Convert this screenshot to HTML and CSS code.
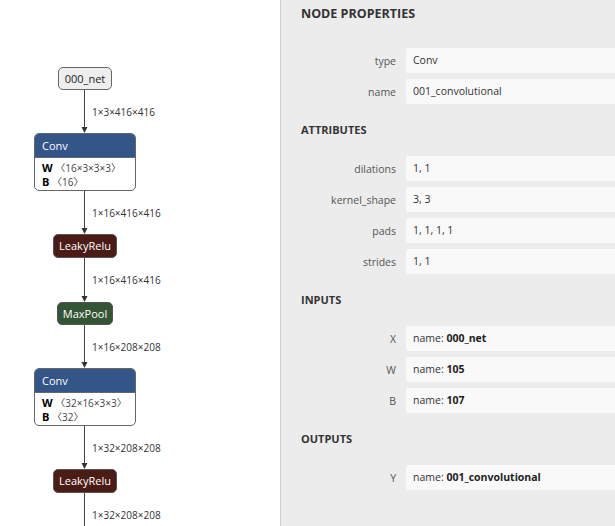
FILE: index.html
```html
<!DOCTYPE html>
<html lang="en">
<head>
  <meta charset="UTF-8">
  <title>Graph</title>
  <link rel="stylesheet" href="styles.css">
</head>
<body>
  <div class="graph">
    <div class="column">
      <div class="node node-input">000_net</div>
      <div class="edge">
        <svg class="wire" width="9" height="43" viewBox="0 0 9 43"><line x1="4.5" y1="0" x2="4.5" y2="40"/><path d="M1.5 37 L4.5 43 L7.5 37 Z"/></svg>
        <span class="shape">1×3×416×416</span>
      </div>
      <div class="node node-layer">
        <div class="node-title">Conv</div>
        <div class="node-body">
          <div><b>W</b> 〈16×3×3×3〉</div>
          <div><b>B</b> 〈16〉</div>
        </div>
      </div>
      <div class="edge">
        <svg class="wire" width="9" height="43" viewBox="0 0 9 43"><line x1="4.5" y1="0" x2="4.5" y2="40"/><path d="M1.5 37 L4.5 43 L7.5 37 Z"/></svg>
        <span class="shape">1×16×416×416</span>
      </div>
      <div class="node node-op node-activation">LeakyRelu</div>
      <div class="edge">
        <svg class="wire" width="9" height="44" viewBox="0 0 9 44"><line x1="4.5" y1="0" x2="4.5" y2="41"/><path d="M1.5 38 L4.5 44 L7.5 38 Z"/></svg>
        <span class="shape">1×16×416×416</span>
      </div>
      <div class="node node-op node-pool">MaxPool</div>
      <div class="edge">
        <svg class="wire" width="9" height="43" viewBox="0 0 9 43"><line x1="4.5" y1="0" x2="4.5" y2="40"/><path d="M1.5 37 L4.5 43 L7.5 37 Z"/></svg>
        <span class="shape">1×16×208×208</span>
      </div>
      <div class="node node-layer">
        <div class="node-title">Conv</div>
        <div class="node-body">
          <div><b>W</b> 〈32×16×3×3〉</div>
          <div><b>B</b> 〈32〉</div>
        </div>
      </div>
      <div class="edge">
        <svg class="wire" width="9" height="43" viewBox="0 0 9 43"><line x1="4.5" y1="0" x2="4.5" y2="40"/><path d="M1.5 37 L4.5 43 L7.5 37 Z"/></svg>
        <span class="shape">1×32×208×208</span>
      </div>
      <div class="node node-op node-activation">LeakyRelu</div>
      <div class="edge">
        <svg class="wire" width="9" height="43" viewBox="0 0 9 43"><line x1="4.5" y1="0" x2="4.5" y2="43"/></svg>
        <span class="shape">1×32×208×208</span>
      </div>
    </div>
  </div>

  <aside class="sidebar">
    <h2 class="sidebar-title">NODE PROPERTIES</h2>

    <section class="section section-first">
      <div class="item"><span class="item-name">type</span><span class="item-value">Conv</span></div>
      <div class="item"><span class="item-name">name</span><span class="item-value">001_convolutional</span></div>
    </section>

    <section class="section">
      <h3 class="section-title">ATTRIBUTES</h3>
      <div class="item"><span class="item-name">dilations</span><span class="item-value">1, 1</span></div>
      <div class="item"><span class="item-name">kernel_shape</span><span class="item-value">3, 3</span></div>
      <div class="item"><span class="item-name">pads</span><span class="item-value">1, 1, 1, 1</span></div>
      <div class="item"><span class="item-name">strides</span><span class="item-value">1, 1</span></div>
    </section>

    <section class="section">
      <h3 class="section-title">INPUTS</h3>
      <div class="item"><span class="item-name">X</span><span class="item-value">name: <b>000_net</b></span></div>
      <div class="item"><span class="item-name">W</span><span class="item-value">name: <b>105</b></span></div>
      <div class="item"><span class="item-name">B</span><span class="item-value">name: <b>107</b></span></div>
    </section>

    <section class="section">
      <h3 class="section-title">OUTPUTS</h3>
      <div class="item"><span class="item-name">Y</span><span class="item-value">name: <b>001_convolutional</b></span></div>
    </section>
  </aside>
</body>
</html>
```

FILE: styles.css
```css
html,
body {
    height: 100%;
}

body {
    margin: 0;
    display: flex;
    overflow: hidden;
    font-family: "Open Sans", "Noto Sans CJK JP", sans-serif;
    color: #333;
}

/* graph */

.graph {
    width: 280px;
    flex: none;
    background: #fff;
}

.column {
    width: 170px;
    padding-top: 67px;
    display: flex;
    flex-direction: column;
    align-items: center;
}

.node {
    box-sizing: border-box;
    border: 1px solid #666;
    border-radius: 5px;
    font-size: 11px;
}

.node-input {
    width: 54px;
    height: 23px;
    line-height: 21px;
    text-align: center;
    background: #eee;
    color: #222;
}

.node-op {
    height: 24px;
    line-height: 22px;
    text-align: center;
    color: #fff;
    border-color: #555;
}

.node-activation {
    width: 64px;
    background: #4b1b16;
}

.node-pool {
    width: 56px;
    height: 23px;
    line-height: 21px;
    background: #335533;
}

.node-layer {
    width: 102px;
    height: 58px;
    overflow: hidden;
    background: #fff;
}

.node-title {
    height: 23px;
    line-height: 23px;
    padding-left: 7px;
    background: #335588;
    color: #fff;
    border-bottom: 1px solid #666;
}

.node-body {
    padding: 3px 7px 0;
    font-size: 10px;
    line-height: 13px;
    color: #444;
}

.node-body b {
    font-size: 11px;
    color: #000;
}

.edge {
    width: 170px;
    box-sizing: border-box;
    padding-left: 80px;
    display: flex;
    align-items: center;
}

.wire {
    display: block;
    flex: none;
}

.wire line {
    stroke: #444;
    stroke-width: 1;
}

.wire path {
    fill: #333;
}

.shape {
    margin-left: 3px;
    font-size: 10px;
    white-space: nowrap;
    color: #333;
}

/* sidebar */

.sidebar {
    flex: 1;
    min-width: 0;
    background: #ececec;
    border-left: 1px solid #ccc;
    padding-top: 4px;
}

.sidebar-title {
    margin: 0 0 24px 20px;
    font-size: 12.5px;
    line-height: 20px;
    font-weight: bold;
    color: #333;
}

.section {
    display: flex;
    flex-direction: column;
    gap: 6px;
    margin-bottom: 16px;
}

.section-title {
    margin: 0 0 10px 20px;
    font-size: 11px;
    line-height: 20px;
    font-weight: bold;
    color: #333;
}

.item {
    display: flex;
    align-items: center;
    height: 25px;
    font-size: 10.5px;
}

.item-name {
    width: 115px;
    flex: none;
    text-align: right;
    color: #555;
}

.item-value {
    flex: 1;
    height: 25px;
    line-height: 25px;
    margin-left: 10px;
    padding-left: 7px;
    background: #f9f9f9;
    border-radius: 2px 0 0 2px;
    color: #333;
    white-space: nowrap;
}

.item-value b {
    color: #222;
}
```
